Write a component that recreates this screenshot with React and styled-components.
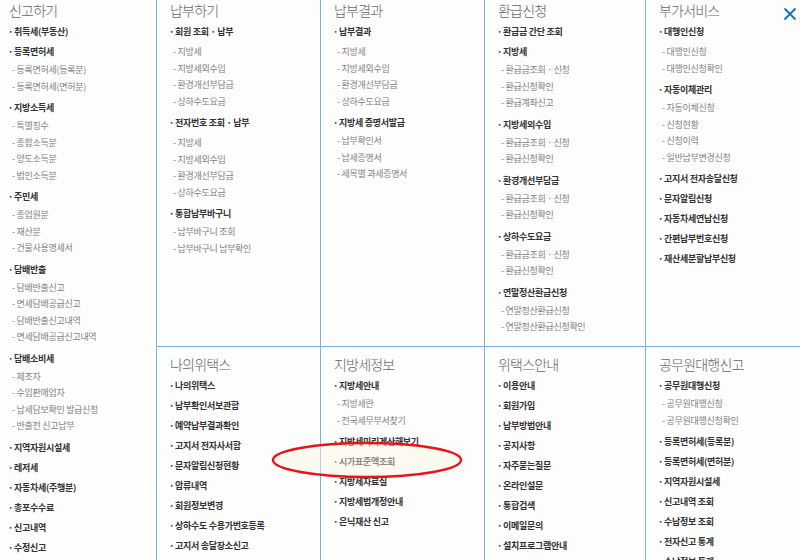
import React from "react";
import styled, { createGlobalStyle } from "styled-components";

const GlobalStyle = createGlobalStyle`
  html, body { margin: 0; padding: 0; background: #fdfdfd; overflow: hidden; }
  body { font-family: "Noto Sans CJK KR", "Noto Sans", sans-serif; }
`;

const LINE = "#7fb1e2";

const Page = styled.div`
  position: relative;
  width: 800px;
  height: 560px;
  overflow: hidden;
  display: flex;
  background: #fdfdfd;
`;

const SideColumn = styled.section`
  flex: 0 0 157px;
  box-sizing: border-box;
  border-right: 1px solid ${LINE};
  padding: 0 0 0 8px;
`;

const Grid = styled.div`
  flex: 1;
  display: grid;
  grid-template-columns: 164px 164px 161px 1fr;
  grid-template-rows: 347px auto;
`;

const Cell = styled.section`
  box-sizing: border-box;
  padding: ${(p) => (p.$top ? "0" : "7px")} 0 0 12px;
  border-right: ${(p) => (p.$last ? "none" : `1px solid ${LINE}`)};
  border-bottom: ${(p) => (p.$top ? `1px solid ${LINE}` : "none")};
  overflow: hidden;
`;

const Title = styled.h2`
  margin: 0 0 2px 1px;
  font-size: 14px;
  font-weight: 300;
  line-height: 20px;
  color: #666;
  letter-spacing: -0.8px;
  white-space: nowrap;
`;

const Heading = styled.div`
  font-size: 9px;
  font-weight: 700;
  line-height: 20px;
  color: #333;
  letter-spacing: -0.3px;
  white-space: nowrap;
  &::before { content: "·"; margin-right: 1px; }
`;

const SubList = styled.ul`
  list-style: none;
  margin: 0 0 3px;
  padding: 0 0 0 4px;
`;

const SubItem = styled.li`
  font-size: 9px;
  line-height: 16.5px;
  color: #828282;
  letter-spacing: -0.3px;
  white-space: nowrap;
  &::before { content: "- "; }
`;

const CloseButton = styled.button`
  position: absolute;
  top: 6px;
  right: 2px;
  width: 16px;
  height: 16px;
  padding: 0;
  border: none;
  background: transparent;
  cursor: pointer;
`;

const Annotation = styled.svg`
  position: absolute;
  left: 270px;
  top: 440px;
  pointer-events: none;
`;

const Spacer = styled.div`
  height: ${(p) => p.$h}px;
`;

const side = {
  title: "신고하기",
  groups: [
    { h: "취득세(부동산)" },
    { h: "등록면허세", subs: ["등록면허세(등록분)", "등록면허세(면허분)"] },
    { h: "지방소득세", subs: ["특별징수", "종합소득분", "양도소득분", "법인소득분"] },
    { h: "주민세", subs: ["종업원분", "재산분", "건물사용명세서"] },
    { h: "담배반출", subs: ["담배반출신고", "면세담배공급신고", "담배반출신고내역", "면세담배공급신고내역"] },
    { h: "담배소비세", subs: ["제조자", "수입판매업자", "납세담보확인 발급신청", "반출전 신고납부"] },
    { h: "지역자원시설세" },
    { h: "레저세" },
    { h: "자동차세(주행분)" },
    { h: "총포수수료" },
    { h: "신고내역" },
    { h: "수정신고" },
  ],
};

const topRow = [
  {
    title: "납부하기",
    groups: [
      { h: "회원 조회 · 납부", subs: ["지방세", "지방세외수입", "환경개선부담금", "상하수도요금"], gap: true },
      { h: "전자번호 조회 · 납부", subs: ["지방세", "지방세외수입", "환경개선부담금", "상하수도요금"], gap: true },
      { h: "통합납부바구니", subs: ["납부바구니 조회", "납부바구니 납부확인"] },
    ],
  },
  {
    title: "납부결과",
    groups: [
      { h: "납부결과", subs: ["지방세", "지방세외수입", "환경개선부담금", "상하수도요금"], gap: true },
      { h: "지방세 증명서발급", subs: ["납부확인서", "납세증명서", "세목별 과세증명서"] },
    ],
  },
  {
    title: "환급신청",
    groups: [
      { h: "환급금 간단 조회" },
      { h: "지방세", subs: ["환급금조회 · 신청", "환급신청확인", "환급계좌신고"] },
      { h: "지방세외수입", subs: ["환급금조회 · 신청", "환급신청확인"] },
      { h: "환경개선부담금", subs: ["환급금조회 · 신청", "환급신청확인"] },
      { h: "상하수도요금", subs: ["환급금조회 · 신청", "환급신청확인"] },
      { h: "연말정산환급신청", subs: ["연말정산환급신청", "연말정산환급신청확인"] },
    ],
  },
  {
    title: "부가서비스",
    groups: [
      { h: "대행인신청", subs: ["대행인신청", "대행인신청확인"], gap: true },
      { h: "자동이체관리", subs: ["자동이체신청", "신청현황", "신청이력", "일반납부변경신청"] },
      { h: "고지서 전자송달신청" },
      { h: "문자알림신청" },
      { h: "자동차세연납신청" },
      { h: "간편납부번호신청" },
      { h: "재산세분할납부신청" },
    ],
  },
];

const bottomRow = [
  {
    title: "나의위택스",
    groups: [
      { h: "나의위택스" },
      { h: "납부확인서보관함" },
      { h: "예약납부결과확인" },
      { h: "고지서 전자사서함" },
      { h: "문자알림신청현황" },
      { h: "압류내역" },
      { h: "회원정보변경" },
      { h: "상하수도 수용가번호등록" },
      { h: "고지서 송달장소신고" },
    ],
  },
  {
    title: "지방세정보",
    groups: [
      { h: "지방세안내", subs: ["지방세란", "전국세무부서찾기"] },
      { h: "지방세미리계산해보기" },
      { h: "시가표준액조회" },
      { h: "지방세자료실" },
      { h: "지방세법개정안내" },
      { h: "은닉재산 신고" },
    ],
  },
  {
    title: "위택스안내",
    groups: [
      { h: "이용안내" },
      { h: "회원가입" },
      { h: "납부방법안내" },
      { h: "공지사항" },
      { h: "자주묻는질문" },
      { h: "온라인설문" },
      { h: "통합검색" },
      { h: "이메일문의" },
      { h: "설치프로그램안내" },
    ],
  },
  {
    title: "공무원대행신고",
    groups: [
      { h: "공무원대행신청", subs: ["공무원대행신청", "공무원대행신청확인"] },
      { h: "등록면허세(등록분)" },
      { h: "등록면허세(면허분)" },
      { h: "지역자원시설세" },
      { h: "신고내역 조회" },
      { h: "수납정보 조회" },
      { h: "전자신고 통계" },
      { h: "수납정보 통계" },
    ],
  },
];

function Groups({ groups }) {
  return groups.map((g, i) => (
    <React.Fragment key={i}>
      <Heading>{g.h}</Heading>
      {g.gap && <Spacer $h={2} />}
      {g.subs && (
        <SubList>
          {g.subs.map((s, j) => (
            <SubItem key={j}>{s}</SubItem>
          ))}
        </SubList>
      )}
    </React.Fragment>
  ));
}

export default function App() {
  return (
    <>
      <GlobalStyle />
      <Page>
        <SideColumn>
          <Title>{side.title}</Title>
          <Groups groups={side.groups} />
        </SideColumn>
        <Grid>
          {topRow.map((c, i) => (
            <Cell key={"t" + i} $top $last={i === topRow.length - 1}>
              <Title>{c.title}</Title>
              <Groups groups={c.groups} />
            </Cell>
          ))}
          {bottomRow.map((c, i) => (
            <Cell key={"b" + i} $last={i === bottomRow.length - 1}>
              <Title>{c.title}</Title>
              <Groups groups={c.groups} />
            </Cell>
          ))}
        </Grid>
        <CloseButton aria-label="닫기">
          <svg width="16" height="16" viewBox="0 0 16 16">
            <path d="M2.5 2.5 L13.5 13.5 M13.5 2.5 L2.5 13.5" stroke="#1f6fc6" strokeWidth="2" fill="none" />
          </svg>
        </CloseButton>
        <Annotation width="200" height="42" viewBox="0 0 200 42">
          <ellipse cx="97" cy="20" rx="94" ry="17" fill="rgba(250,245,225,0.45)" stroke="#e8141c" strokeWidth="2.4" />
        </Annotation>
      </Page>
    </>
  );
}
